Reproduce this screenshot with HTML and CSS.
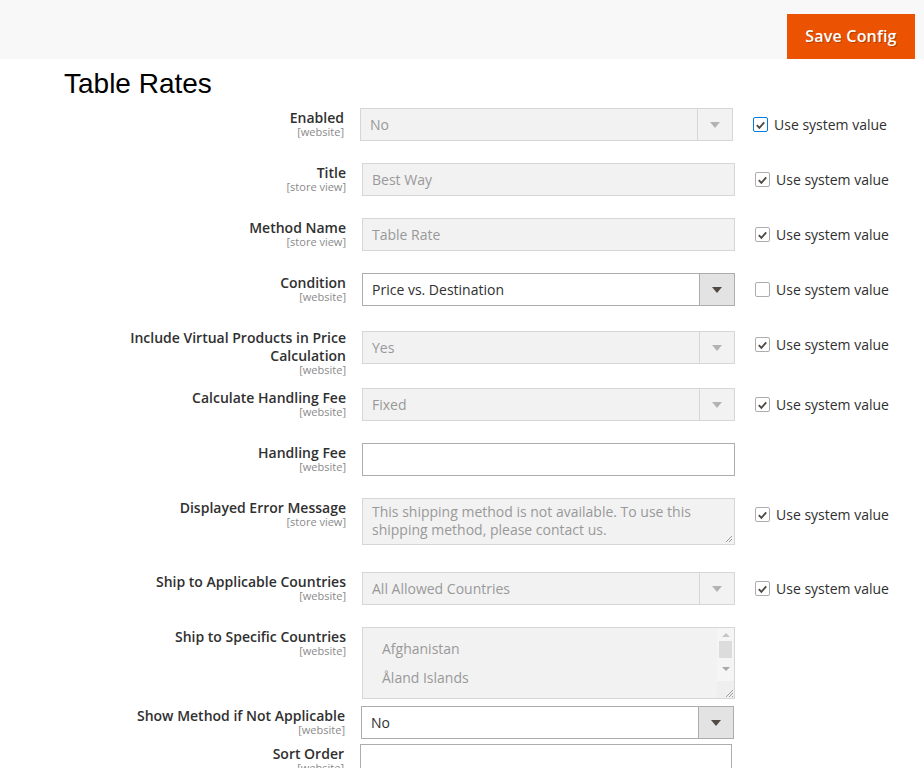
FILE: index.html
```html
<!DOCTYPE html>
<html lang="en">
<head>
<meta charset="utf-8">
<title>Table Rates</title>
<link rel="stylesheet" href="styles.css">
</head>
<body>
<header class="page-actions">
  <button class="btn-primary" type="button">Save Config</button>
</header>
<h1 class="page-title">Table Rates</h1>
<div class="form">

  <div class="field shift-2">
    <div class="field-label"><span class="label-text">Enabled</span><span class="scope">[website]</span></div>
    <div class="control">
      <div class="select is-disabled"><span class="select-value">No</span><span class="select-arrow"><i class="tri"></i></span></div>
    </div>
    <div class="use-default"><span class="checkbox is-focused"><svg viewBox="0 0 14 14" width="14" height="14"><path d="M3 7.2 L5.8 10 L11 4.2" fill="none" stroke="#514943" stroke-width="2"/></svg></span><span class="use-text">Use system value</span></div>
  </div>

  <div class="field">
    <div class="field-label"><span class="label-text">Title</span><span class="scope">[store view]</span></div>
    <div class="control">
      <div class="input is-disabled">Best Way</div>
    </div>
    <div class="use-default"><span class="checkbox"><svg viewBox="0 0 14 14" width="14" height="14"><path d="M3 7.2 L5.8 10 L11 4.2" fill="none" stroke="#514943" stroke-width="2"/></svg></span><span class="use-text">Use system value</span></div>
  </div>

  <div class="field">
    <div class="field-label"><span class="label-text">Method Name</span><span class="scope">[store view]</span></div>
    <div class="control">
      <div class="input is-disabled">Table Rate</div>
    </div>
    <div class="use-default"><span class="checkbox"><svg viewBox="0 0 14 14" width="14" height="14"><path d="M3 7.2 L5.8 10 L11 4.2" fill="none" stroke="#514943" stroke-width="2"/></svg></span><span class="use-text">Use system value</span></div>
  </div>

  <div class="field">
    <div class="field-label"><span class="label-text">Condition</span><span class="scope">[website]</span></div>
    <div class="control">
      <div class="select"><span class="select-value">Price vs. Destination</span><span class="select-arrow"><i class="tri"></i></span></div>
    </div>
    <div class="use-default"><span class="checkbox is-empty"></span><span class="use-text">Use system value</span></div>
  </div>

  <div class="field field-tall">
    <div class="field-label"><span class="label-text">Include Virtual Products in Price Calculation</span><span class="scope">[website]</span></div>
    <div class="control">
      <div class="select is-disabled"><span class="select-value">Yes</span><span class="select-arrow"><i class="tri"></i></span></div>
    </div>
    <div class="use-default"><span class="checkbox"><svg viewBox="0 0 14 14" width="14" height="14"><path d="M3 7.2 L5.8 10 L11 4.2" fill="none" stroke="#514943" stroke-width="2"/></svg></span><span class="use-text">Use system value</span></div>
  </div>

  <div class="field">
    <div class="field-label"><span class="label-text">Calculate Handling Fee</span><span class="scope">[website]</span></div>
    <div class="control">
      <div class="select is-disabled"><span class="select-value">Fixed</span><span class="select-arrow"><i class="tri"></i></span></div>
    </div>
    <div class="use-default"><span class="checkbox"><svg viewBox="0 0 14 14" width="14" height="14"><path d="M3 7.2 L5.8 10 L11 4.2" fill="none" stroke="#514943" stroke-width="2"/></svg></span><span class="use-text">Use system value</span></div>
  </div>

  <div class="field">
    <div class="field-label"><span class="label-text">Handling Fee</span><span class="scope">[website]</span></div>
    <div class="control">
      <div class="input"></div>
    </div>
  </div>

  <div class="field field-textarea">
    <div class="field-label"><span class="label-text">Displayed Error Message</span><span class="scope">[store view]</span></div>
    <div class="control">
      <div class="textarea is-disabled">This shipping method is not available. To use this shipping method, please contact us.<span class="resizer"><svg viewBox="0 0 10 10" width="10" height="10"><path d="M9 3 L3 9 M9 6 L6 9" stroke="#9a9a9a" stroke-width="1"/></svg></span></div>
    </div>
    <div class="use-default"><span class="checkbox"><svg viewBox="0 0 14 14" width="14" height="14"><path d="M3 7.2 L5.8 10 L11 4.2" fill="none" stroke="#514943" stroke-width="2"/></svg></span><span class="use-text">Use system value</span></div>
  </div>

  <div class="field">
    <div class="field-label"><span class="label-text">Ship to Applicable Countries</span><span class="scope">[website]</span></div>
    <div class="control">
      <div class="select is-disabled"><span class="select-value">All Allowed Countries</span><span class="select-arrow"><i class="tri"></i></span></div>
    </div>
    <div class="use-default"><span class="checkbox"><svg viewBox="0 0 14 14" width="14" height="14"><path d="M3 7.2 L5.8 10 L11 4.2" fill="none" stroke="#514943" stroke-width="2"/></svg></span><span class="use-text">Use system value</span></div>
  </div>

  <div class="field field-multi">
    <div class="field-label"><span class="label-text">Ship to Specific Countries</span><span class="scope">[website]</span></div>
    <div class="control">
      <div class="multiselect is-disabled">
        <ul class="options">
          <li>Afghanistan</li>
          <li>Åland Islands</li>
        </ul>
        <div class="scrollbar">
          <span class="sb-arrow sb-up"></span>
          <span class="sb-thumb"></span>
          <span class="sb-arrow sb-down"></span>
          <span class="sb-corner"><svg viewBox="0 0 10 10" width="10" height="10"><path d="M9 2 L2 9 M9 5 L5 9 M9 8 L8 9" stroke="#a0a0a0" stroke-width="1"/></svg></span>
        </div>
      </div>
    </div>
  </div>

  <div class="field shift-1 field-show">
    <div class="field-label"><span class="label-text">Show Method if Not Applicable</span><span class="scope">[website]</span></div>
    <div class="control">
      <div class="select"><span class="select-value">No</span><span class="select-arrow"><i class="tri"></i></span></div>
    </div>
  </div>

  <div class="field shift-2">
    <div class="field-label"><span class="label-text">Sort Order</span><span class="scope">[website]</span></div>
    <div class="control control-narrow">
      <div class="input"></div>
    </div>
  </div>

</div>
</body>
</html>
```

FILE: styles.css
```css
html, body {
  margin: 0;
  padding: 0;
  overflow: hidden;
  background: #ffffff;
}

body {
  font-family: "Open Sans", "Noto Sans", sans-serif;
  font-size: 14px;
  color: #303030;
}

.page-actions {
  height: 59px;
  background: #f8f8f8;
  display: flex;
  justify-content: flex-end;
  align-items: flex-end;
  padding-right: 9px;
}

.btn-primary {
  width: 128px;
  height: 45px;
  border: 0;
  margin: 0;
  padding: 0;
  background: #eb5202;
  color: #ffffff;
  font-family: "Open Sans", sans-serif;
  font-weight: 600;
  font-size: 16px;
  letter-spacing: 0.2px;
  line-height: 45px;
  text-shadow: 1px 1px 0 rgba(0, 0, 0, 0.25);
}

.page-title {
  margin: 8px 0 8px 64px;
  font-family: "Liberation Sans", Arial, sans-serif;
  font-weight: 400;
  font-size: 28px;
  line-height: 33px;
  color: #000000;
}

.form {
  display: flex;
  flex-direction: column;
  height: 660px;
  overflow: hidden;
}

.field {
  display: flex;
  align-items: flex-start;
  margin-bottom: 22px;
  flex: none;
}

.shift-2 { margin-left: -2px; }
.shift-1 { margin-left: -1px; }

.field-tall { margin-bottom: 12px; }
.field-tall .control { margin-top: 3px; }
.field-textarea { margin-bottom: 27px; }
.field-multi { margin-bottom: 7px; }
.field-show { margin-bottom: 5px; }

.field-label {
  box-sizing: border-box;
  width: 346px;
  padding-left: 120px;
  padding-top: 1px;
  margin-right: 16px;
  text-align: right;
}

.label-text {
  display: block;
  font-weight: 600;
  font-size: 14px;
  line-height: 18px;
  color: #303030;
}

.scope {
  display: block;
  font-size: 11px;
  line-height: 12px;
  margin-top: -1px;
  color: #8a8a8a;
}

.control {
  width: 373px;
  flex: none;
}

.control-narrow { width: 372px; }

.input,
.select,
.textarea,
.multiselect {
  box-sizing: border-box;
  border: 1px solid #adadad;
  background: #ffffff;
  color: #303030;
  font-size: 14px;
}

.input {
  height: 33px;
  line-height: 31px;
  padding: 0 9px;
}

.select {
  height: 33px;
  display: flex;
}

.select-value {
  flex: 1;
  line-height: 31px;
  padding: 0 9px;
}

.select-arrow {
  width: 34px;
  flex: none;
  border-left: 1px solid #adadad;
  background: #e3e3e3;
  display: flex;
  align-items: center;
  justify-content: center;
}

.tri {
  display: block;
  width: 0;
  height: 0;
  border-left: 5px solid transparent;
  border-right: 5px solid transparent;
  border-top: 6px solid #514943;
  margin-top: 1px;
}

.is-disabled {
  background: #f2f2f2;
  border-color: #d6d6d6;
  color: #999999;
}

.is-disabled .select-arrow {
  background: #f2f2f2;
  border-left-color: #d6d6d6;
}

.is-disabled .tri {
  border-top: 6px solid #b3b3b3;
}

.textarea {
  position: relative;
  height: 47px;
  padding: 4px 9px 0;
  line-height: 18px;
}

.resizer {
  position: absolute;
  right: 1px;
  bottom: 1px;
  width: 10px;
  height: 10px;
  display: block;
}

.resizer svg,
.sb-corner svg { display: block; }

.multiselect {
  height: 72px;
  display: flex;
}

.options {
  list-style: none;
  margin: 0;
  padding: 6px 0 0 19px;
  flex: 1;
}

.options li {
  line-height: 29px;
}

.scrollbar {
  width: 17px;
  flex: none;
  display: flex;
  flex-direction: column;
  align-items: center;
  background: #f5f5f5;
}

.sb-arrow {
  display: block;
  width: 0;
  height: 0;
  border-left: 4px solid transparent;
  border-right: 4px solid transparent;
}

.sb-up {
  margin-top: 5px;
  border-bottom: 4px solid #c6c6c6;
}

.sb-thumb {
  display: block;
  width: 13px;
  height: 17px;
  margin-top: 4px;
  background: #dcdcdc;
}

.sb-down {
  margin-top: 9px;
  border-top: 4px solid #a8a8a8;
}

.sb-corner {
  margin-top: auto;
  width: 17px;
  height: 17px;
  display: flex;
  align-items: flex-end;
  justify-content: flex-end;
  background: #efefef;
}

.use-default {
  height: 33px;
  margin-left: 20px;
  display: flex;
  align-items: center;
  flex: none;
}

.checkbox {
  box-sizing: border-box;
  width: 15px;
  height: 15px;
  border: 1px solid #adadad;
  border-radius: 2px;
  background: #ffffff;
  display: flex;
  align-items: center;
  justify-content: center;
  margin-right: 6px;
}

.checkbox svg { display: block; }

.is-focused { border-color: #007bdb; }

.use-text {
  font-size: 14px;
  line-height: 18px;
  color: #303030;
}
```
